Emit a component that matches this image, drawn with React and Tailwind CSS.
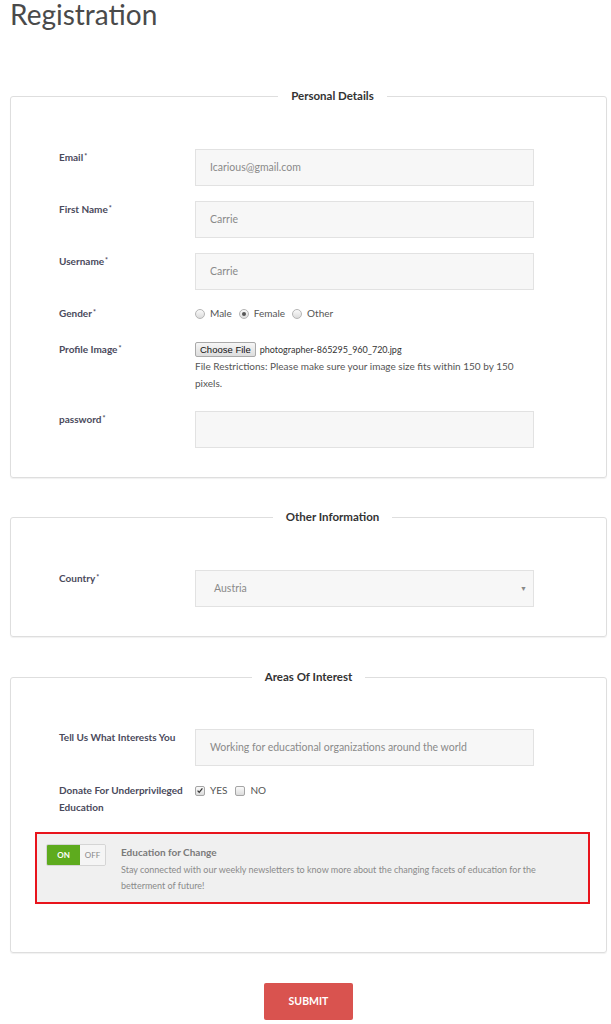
import React from "react";

const font = { fontFamily: "Lato, 'Open Sans', sans-serif" };

function Label({ children, req = true }) {
  return (
    <div className="w-[136px] shrink-0 text-[10px] leading-[17px] font-bold text-[#4a4a5c] whitespace-nowrap">
      {children}
      {req && <sup className="text-[7px] ml-[1px] relative -top-[2px]">*</sup>}
    </div>
  );
}

function TextBox({ value, arrow }) {
  return (
    <div className="w-[339px] h-[37px] bg-[#f7f7f7] border border-[#e2e2e2] flex items-center justify-between pl-[14px] pr-[6px] text-[10.5px] text-[#8a8a8a]">
      <span>{value}</span>
      {arrow && <span className="text-[7px] text-[#888]">▼</span>}
    </div>
  );
}

function Radio({ checked }) {
  return (
    <span className="w-[10px] h-[10px] rounded-full border border-[#b5b5b5] bg-gradient-to-b from-[#fafafa] to-[#dcdcdc] flex items-center justify-center">
      {checked && <span className="w-[4px] h-[4px] rounded-full bg-[#555]" />}
    </span>
  );
}

function Check({ checked }) {
  return (
    <span className="w-[10px] h-[10px] rounded-[2px] border border-[#a5a5a5] bg-gradient-to-b from-[#fafafa] to-[#dcdcdc] flex items-center justify-center">
      {checked && (
        <svg viewBox="0 0 10 10" className="w-[9px] h-[9px]">
          <path d="M2 5.2 L4 7.3 L8 2.4" fill="none" stroke="#333" strokeWidth="1.6" />
        </svg>
      )}
    </span>
  );
}

function Section({ title, className = "", children }) {
  return (
    <fieldset
      className={`border border-[#dedede] rounded-[3px] shadow-[0_1px_1px_rgba(0,0,0,0.06)] ${className}`}
    >
      <legend className="mx-auto px-[13px] text-[11.5px] leading-[16px] font-bold text-[#333]">
        {title}
      </legend>
      {children}
    </fieldset>
  );
}

export default function App() {
  return (
    <div className="bg-white min-h-screen pl-[10px] pr-[4px] pb-[10px]" style={font}>
      {/* Header */}
      <h1 className="text-[28px] leading-[28px] text-[#4a4a4a] font-normal">
        Registration
      </h1>

      {/* Personal Details */}
      <Section title="Personal Details" className="mt-[60px] pl-[48px] pt-[45px] pb-[29px]">
        <div className="flex">
          <Label>Email</Label>
          <TextBox value="Icarious@gmail.com" />
        </div>
        <div className="flex mt-[15px]">
          <Label>First Name</Label>
          <TextBox value="Carrie" />
        </div>
        <div className="flex mt-[15px]">
          <Label>Username</Label>
          <TextBox value="Carrie" />
        </div>
        <div className="flex mt-[15px] items-center">
          <Label>Gender</Label>
          <div className="flex items-center gap-[5px] text-[10px] text-[#555]">
            <Radio />
            <span className="mr-[2px]">Male</span>
            <Radio checked />
            <span className="mr-[2px]">Female</span>
            <Radio />
            <span>Other</span>
          </div>
        </div>
        <div className="flex mt-[19px]">
          <Label>Profile Image</Label>
          <div className="w-[339px] text-[10px] leading-[17px] text-[#555]">
            <div className="flex items-center gap-[4px] h-[17px]">
              <span className="h-[15px] px-[4px] border border-[#a9a9a9] rounded-[2px] bg-gradient-to-b from-[#f6f6f6] to-[#dddddd] text-[9.5px] leading-[13px] text-[#111] font-['Liberation_Sans',sans-serif]">
                Choose File
              </span>
              <span className="text-[9px] text-[#333]">photographer-865295_960_720.jpg</span>
            </div>
            <div className="text-[10px]">
              File Restrictions: Please make sure your image size fits within 150 by 150
              pixels.
            </div>
          </div>
        </div>
        <div className="flex mt-[19px]">
          <Label>password</Label>
          <TextBox value="" />
        </div>
      </Section>

      {/* Other Information */}
      <Section title="Other Information" className="mt-[31px] pl-[48px] pt-[45px] pb-[29px]">
        <div className="flex">
          <Label>Country</Label>
          <TextBox value={<span className="pl-[4px]">Austria</span>} arrow />
        </div>
      </Section>

      {/* Areas Of Interest */}
      <Section title="Areas Of Interest" className="mt-[32px] pt-[44px] pb-[48px]">
        <div className="flex pl-[48px]">
          <Label req={false}>Tell Us What Interests You</Label>
          <TextBox value="Working for educational organizations around the world" />
        </div>
        <div className="flex pl-[48px] mt-[16px]">
          <Label req={false}>
            Donate For Underprivileged
            <br />
            Education
          </Label>
          <div className="flex items-center gap-[5px] h-[17px] text-[10px] text-[#555]">
            <Check checked />
            <span className="mr-[3px]">YES</span>
            <Check />
            <span>NO</span>
          </div>
        </div>

        {/* Newsletter */}
        <div className="ml-[24px] w-[555px] mt-[16px] border-2 border-[#e8141c] bg-[#f0f0f0] flex items-start px-[9px] pt-[10px] pb-[8px]">
          <div className="flex w-[60px] h-[22px] rounded-[2px] border border-[#d5d5d5] overflow-hidden shrink-0 text-[8px] font-bold">
            <span className="w-[33px] bg-[#5eab1e] text-white flex items-center justify-center">ON</span>
            <span className="flex-1 bg-[#f5f5f5] text-[#888] flex items-center justify-center font-normal">OFF</span>
          </div>
          <div className="ml-[15px] text-[#8a8a8a]">
            <div className="text-[10px] leading-[16px] font-bold text-[#7a7a7a]">Education for Change</div>
            <div className="text-[9px] leading-[16px] mt-[2px] w-[420px]">
              Stay connected with our weekly newsletters to know more about the changing facets of education for the
              betterment of future!
            </div>
          </div>
        </div>
      </Section>

      {/* Submit */}
      <div className="flex justify-center mt-[30px]">
        <button className="w-[89px] h-[37px] bg-[#d9534f] rounded-[2px] text-white text-[10.5px] font-bold">
          SUBMIT
        </button>
      </div>
    </div>
  );
}
